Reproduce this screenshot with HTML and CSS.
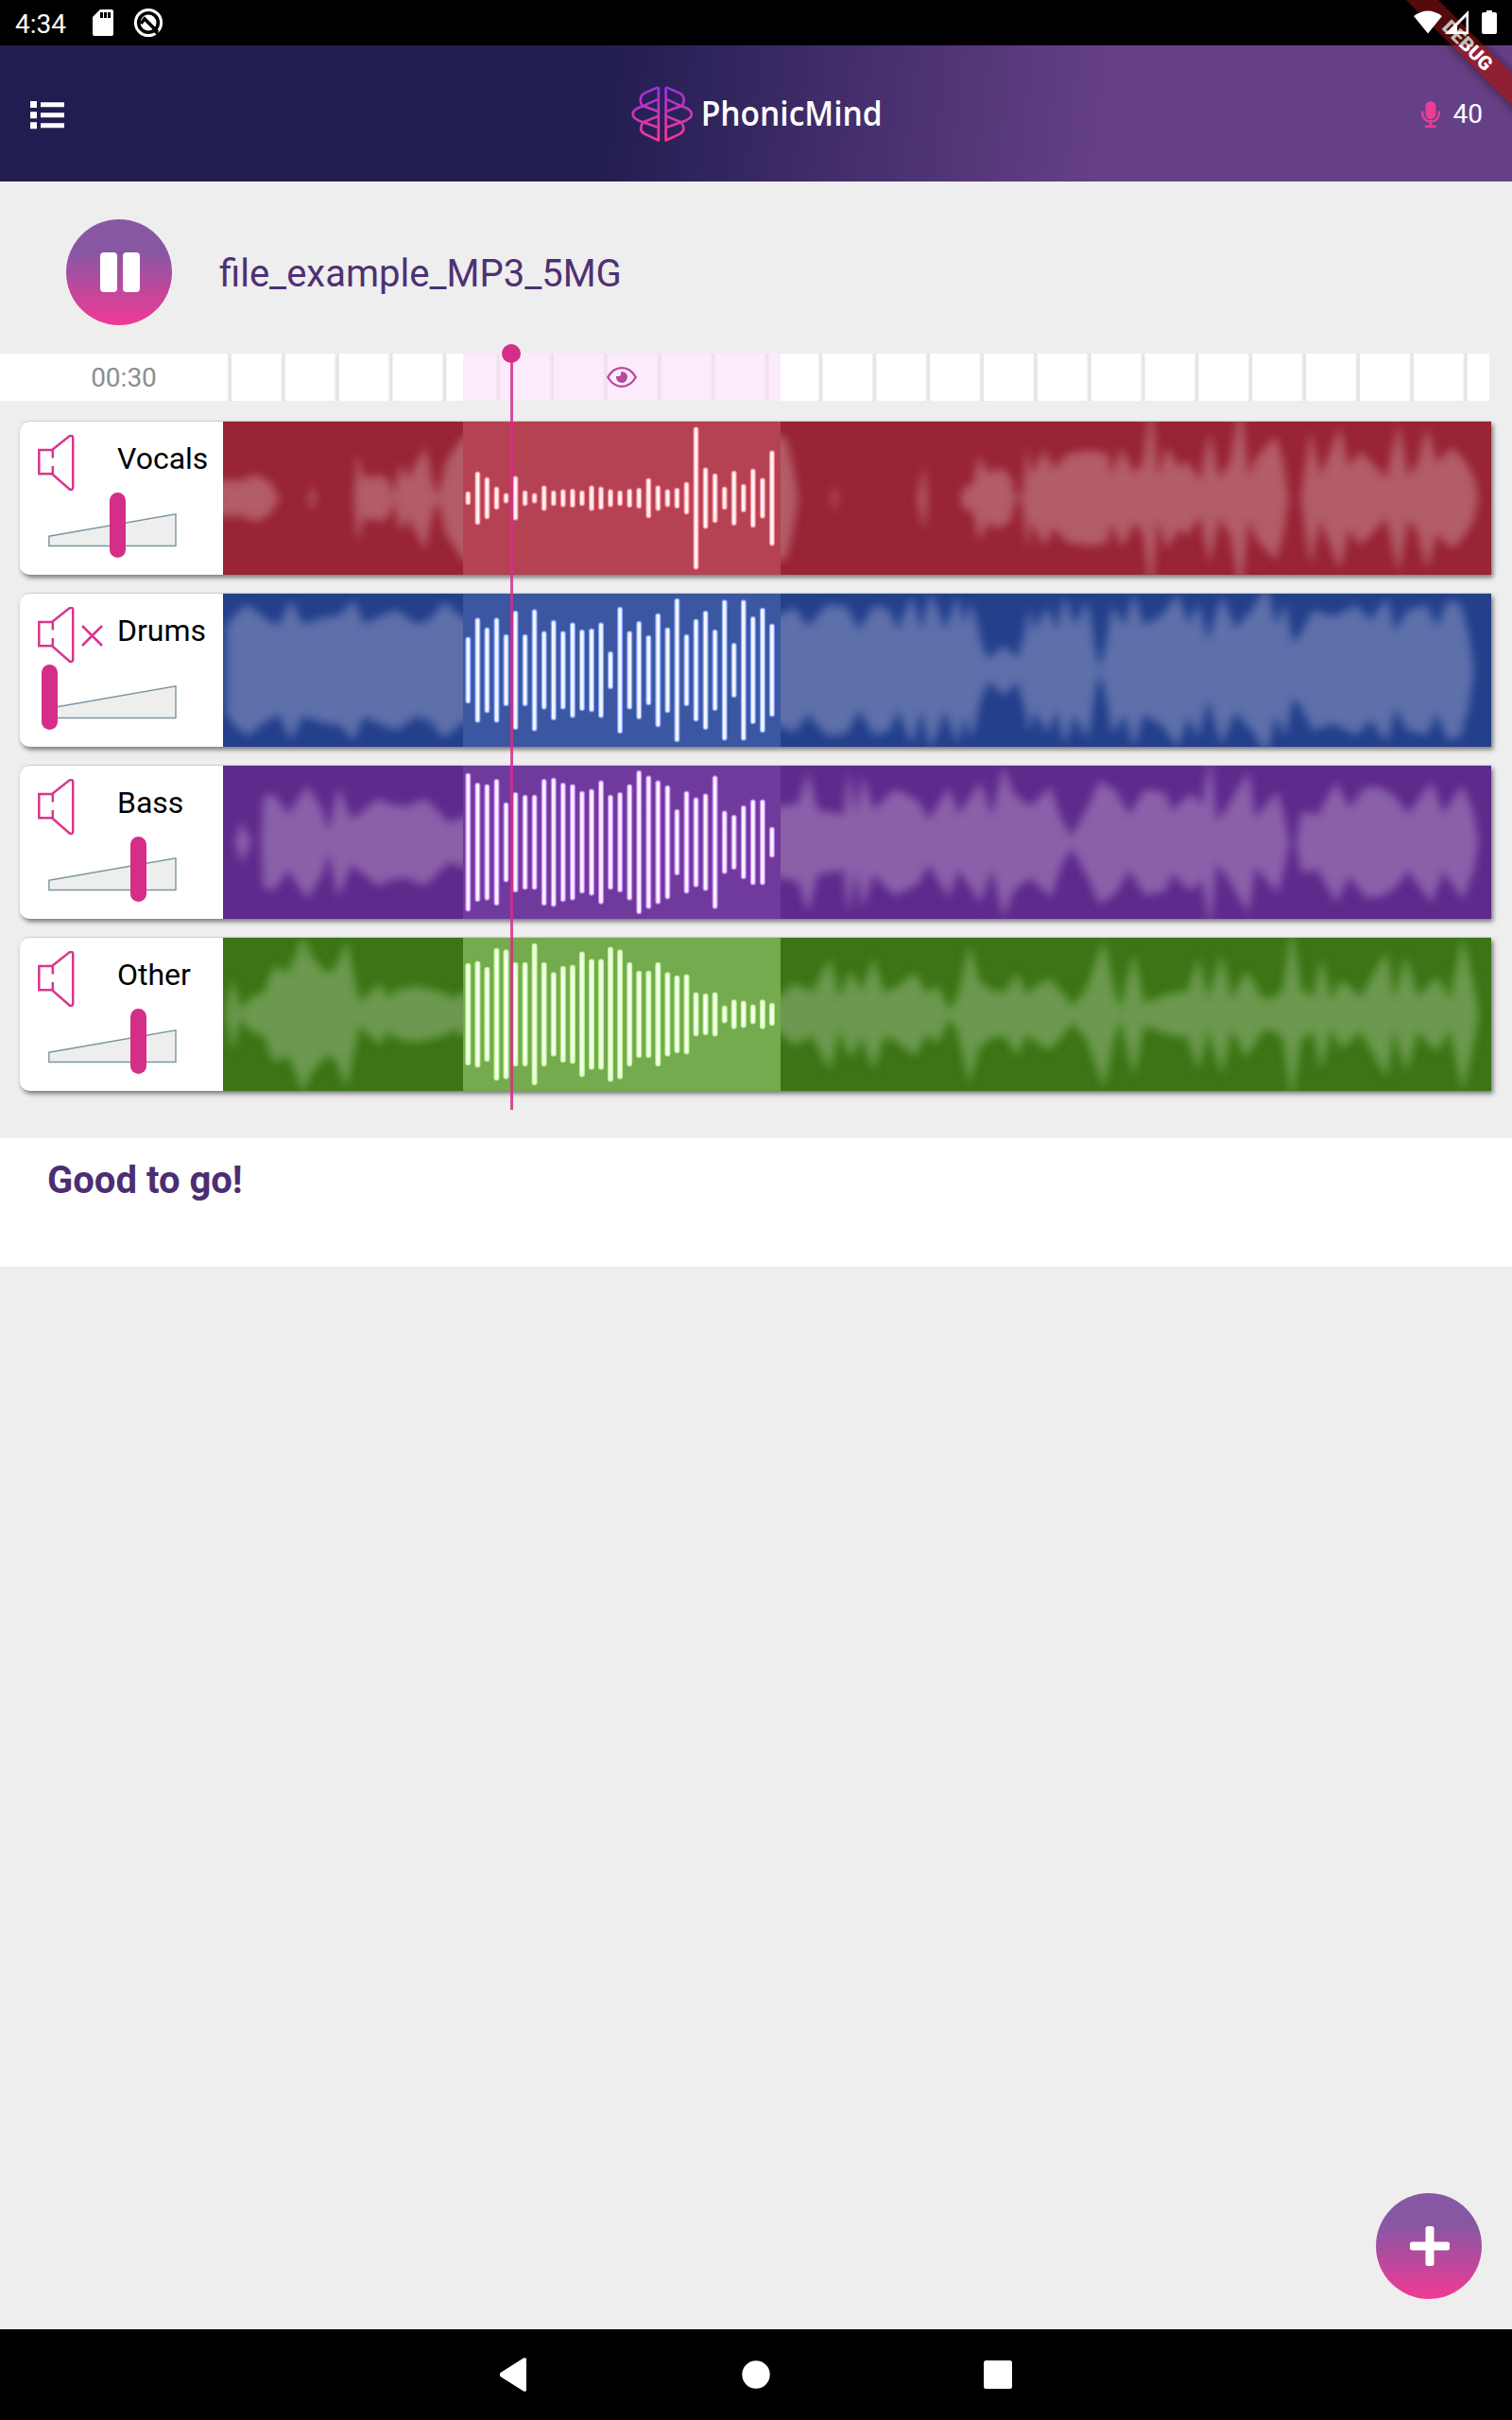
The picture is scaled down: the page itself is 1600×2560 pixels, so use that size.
FILE: index.html
```html
<!DOCTYPE html>
<html lang="en">
<head>
<meta charset="utf-8">
<title>PhonicMind</title>
<link rel="stylesheet" href="styles.css">
</head>
<body>
<svg class="defs" width="0" height="0" aria-hidden="true">
  <defs>
    <linearGradient id="brain" gradientUnits="userSpaceOnUse" x1="0" y1="30" x2="0" y2="90"><stop offset="0" stop-color="#9530dc"/><stop offset="1" stop-color="#fa3a92"/></linearGradient>
    <symbol id="speaker" viewBox="0 0 40 60"><path d="M1.3 16H15L33.5 1.3Q37 0 37.200 3V55.500Q37 59 33.500 57.500L15 41.300H1.300ZM15.800 15V24.500M15.800 33V42"/></symbol>
    <symbol id="wedge" viewBox="0 0 136 36"><path d="M.8 24.200 135 .8V34.500H.8Z"/></symbol>
  </defs>
</svg>

<div class="status">
  <span class="clock">4:34</span>
  <svg class="sd" width="22" height="28" viewBox="0 0 22 28"><path fill="#fff" d="M8 0H20a2 2 0 0 1 2 2V26a2 2 0 0 1-2 2H2a2 2 0 0 1-2-2V8Z"/><path d="M8 3h3v6H8zM12 3h3v6h-3zM16 3h3v6h-3z"/></svg>
  <svg class="q" width="32" height="32" viewBox="0 0 32 32"><circle cx="16" cy="16" r="13.600" fill="none" stroke="#fff" stroke-width="3"/><circle cx="16" cy="16" r="8.500" fill="#fff"/><path d="M8 17 12 12 26 26" fill="none" stroke="#000" stroke-width="3.600"/><path d="M22 24 28 30" stroke="#000" stroke-width="3"/></svg>
  <span class="spacer"></span>
  <svg width="88" height="26" viewBox="0 0 88 26"><path fill="#fff" d="M0 6Q15-5 30 6L15 24.500Z"/><path fill="#fff" fill-rule="evenodd" d="M33 25 58 0V25ZM46 22.500H55.500V6.500L46 16Z"/><path fill="#fff" d="M74 2h3V0h6v2h3q2 0 2 2V23q0 2-2 2H74q-2 0-2-2V4q0-2 2-2Z"/></svg>
</div>

<header class="header">
  <svg class="menu" width="36" height="30" viewBox="0 0 36 30"><path fill="#fff" d="M0 0h7v7H0zM0 11.300h7v7H0zM0 22.300h7v7H0zM11 1.300h25v5H11zM11 12.300h25v5H11zM11 23.300h25v5H11z"/></svg>
  <svg class="logo" width="270" height="68" viewBox="80 80 810 204">
    <g fill="none" stroke="url(#brain)" stroke-width="2.700" stroke-linejoin="round" transform="scale(3)">
      <path d="M56.500 31.800V88.200L41.700 81.300C36.700 78.300 36.700 73.700 40.300 69M56.500 31.800 42.300 38C36 41 36.300 48.700 40.300 51.800L56.500 57.700M56.500 44.300 40.300 51.800C25.700 56.300 25.700 64.300 40.300 69L56.500 62.300M40.300 69 56.500 74.700"/>
      <path d="M64.300 31.800V88.200L79.200 81.300C84.200 78.300 84.200 73.700 80.500 69M64.300 31.800 78.500 38C84.800 41 84.500 48.700 80.500 51.800L64.300 57.700M64.300 44.300 80.500 51.800C95.200 56.300 95.200 64.300 80.500 69L64.300 62.300M80.500 69 64.300 74.700"/>
    </g>
    <text class="brand" x="304" y="218" textLength="576" lengthAdjust="spacingAndGlyphs">PhonicMind</text>
  </svg>
  <div class="credits">
    <svg width="20" height="28" viewBox="0 0 20 28"><rect x="4.500" width="11" height="19" rx="5.500" fill="#ea3d95"/><path d="M1.200 11.500V13A8.500 8.500 0 0 0 18.800 13V11.500M10 21V26M5 26.800H15" fill="none" stroke="#ea3d95" stroke-width="2.400" stroke-linecap="round"/></svg>
    <span>40</span>
  </div>
</header>
<div class="banner">DEBUG</div>
<div class="scrim"></div>

<main class="main">
  <section class="player">
    <button class="round" aria-label="Pause"><svg width="42" height="42" viewBox="0 0 42 42"><rect width="18" height="42" rx="4" fill="#fff"/><rect x="24" width="18" height="42" rx="4" fill="#fff"/></svg></button>
    <h1 class="title">file_example_MP3_5MG</h1>
  </section>

  <section class="timeline">
    <span class="time">00:30</span>
    <div class="ruler"></div>
    <div class="range"><svg width="32" height="22" viewBox="0 0 32 22"><path d="M1.200 11Q7 1.200 16 1.200T30.800 11Q25 20.800 16 20.800T1.200 11Z" fill="none" stroke="#b44a9c" stroke-width="2.300"/><path fill="#b44a9c" d="M15.500 5A6 6 0 1 1 10 10H12.500Q15 10 15 7.500Z"/></svg></div>
    <div class="playhead"></div>
  </section>

  <section class="tracks" id="tracks">
    <article class="track vocals">
      <div class="panel"><svg class="spk"><use href="#speaker"/></svg><span class="name">Vocals</span><div class="volume"><svg class="wedge"><use href="#wedge"/></svg><i class="knob" style="left:65px"></i></div></div>
      <svg class="wave" data-track="vocals" width="1342" height="162" viewBox="236 -81 1342 162"></svg>
    </article>
    <article class="track drums">
      <div class="panel"><svg class="spk"><use href="#speaker"/></svg><svg class="mute" viewBox="0 0 23 23"><path d="M1 1 22 22M22 1 1 22"/></svg><span class="name">Drums</span><div class="volume"><svg class="wedge"><use href="#wedge"/></svg><i class="knob" style="left:-7px"></i></div></div>
      <svg class="wave" data-track="drums" width="1342" height="162" viewBox="236 -81 1342 162"></svg>
    </article>
    <article class="track bass">
      <div class="panel"><svg class="spk"><use href="#speaker"/></svg><span class="name">Bass</span><div class="volume"><svg class="wedge"><use href="#wedge"/></svg><i class="knob" style="left:86.500px"></i></div></div>
      <svg class="wave" data-track="bass" width="1342" height="162" viewBox="236 -81 1342 162"></svg>
    </article>
    <article class="track other">
      <div class="panel"><svg class="spk"><use href="#speaker"/></svg><span class="name">Other</span><div class="volume"><svg class="wedge"><use href="#wedge"/></svg><i class="knob" style="left:86.500px"></i></div></div>
      <svg class="wave" data-track="other" width="1342" height="162" viewBox="236 -81 1342 162"></svg>
    </article>
  </section>

  <section class="message">Good to go!</section>
  <button class="round fab" aria-label="Add"><svg width="42" height="42" viewBox="0 0 42 42"><rect x="16.500" width="9" height="42" rx="2.500" fill="#fff"/><rect y="16.500" width="42" height="9" rx="2.500" fill="#fff"/></svg></button>
</main>

<nav class="nav">
  <svg width="30" height="36" viewBox="0 0 30 36"><path fill="#fff" d="M24 .6Q27-.8 27 2V34Q27 36.800 24 35.400L-.5 20Q-3 18-.5 16Z" transform="translate(1)"/></svg>
  <svg width="30" height="30" viewBox="0 0 30 30"><circle cx="15" cy="15" r="14.700" fill="#fff"/></svg>
  <svg width="30" height="30" viewBox="0 0 30 30"><rect width="30" height="30" rx="2.500" fill="#fff"/></svg>
</nav>
<script src="script.js"></script>
</body>
</html>
```
FILE: styles.css
```css
* { box-sizing: border-box; }
body {
  margin: 0;
  width: 1600px;
  height: 2560px;
  display: flex;
  flex-direction: column;
  position: relative;
  overflow: hidden;
  background: #eee;
  font-family: Roboto, sans-serif;
}
svg { display: block; flex: none; }
button { border: 0; padding: 0; }
.defs { position: absolute; }

.status { height: 48px; flex: none; background: #000; display: flex; align-items: center; padding: 0 16px; color: #fff; }
.status > * { position: relative; z-index: 3; }
.clock { font-size: 28px; line-height: 48px; width: 82px; padding-top: 3px; }
.q { margin-left: 21px; }
.spacer { flex: 1; }

.header {
  height: 144px; flex: none;
  display: grid; grid-template-columns: 1fr auto 1fr; align-items: center;
  padding: 2px 31px 0 32px;
  background: linear-gradient(97deg, #221d51 40%, #664087 73%);
}
.menu { transform: translateY(1px); }
.logo { overflow: visible; transform: translateX(1px); }
.brand { font: 600 110px "Open Sans", sans-serif; fill: #fff; }
.credits { justify-self: end; display: flex; align-items: center; gap: 14px; color: #fff; font-size: 28px; padding-bottom: 1px; }
.banner {
  position: absolute; z-index: 1; left: 1453px; top: 36px; width: 200px; height: 24px;
  transform: rotate(45deg);
  background: rgba(160, 20, 20, .72);
  box-shadow: 0 0 12px rgba(0, 0, 0, .5);
  color: #fff; font-size: 20.4px; font-weight: 900; line-height: 24px; text-align: center;
}
.scrim { position: absolute; z-index: 2; left: 0; top: 0; width: 1600px; height: 48px; background: rgba(0, 0, 0, .25); }

.main { flex: 1; display: flex; flex-direction: column; position: relative; }
.player { height: 182px; padding: 40px 70px 0; display: flex; align-items: flex-start; gap: 50px; }
.round {
  width: 112px; height: 112px; border-radius: 50%; flex: none;
  display: flex; align-items: center; justify-content: center;
  padding-left: 2px;
  background: linear-gradient(#8857a4 30%, #ec3b95 97%);
}
.title { margin: 0; font-size: 40px; font-weight: 400; line-height: 112px; color: #4e3173; padding-top: 2px; }

.timeline { height: 50px; width: 1576px; background: #fff; display: flex; position: relative; }
.time { width: 240px; padding-left: 22px; text-align: center; font-size: 28px; line-height: 52px; color: #8d8d8d; }
.ruler { flex: 1; background: repeating-linear-gradient(90deg, #fff 0, #f0f0f0 1px, #e6e6e6 2.500px, #e3e3e3 3.500px, #e8e8e8 4.500px, #fff 5.500px, #fff 56.860px); }
.range {
  position: absolute; left: 490px; top: 0; width: 336px; height: 50px;
  display: flex; align-items: center; justify-content: center;
  background: rgba(249, 220, 248, .57);
}
.playhead { position: absolute; z-index: 4; left: 540px; top: 0; width: 3px; height: 800px; background: rgba(212, 46, 136, .85); }
.playhead::before { content: ""; position: absolute; left: -9px; top: -10px; width: 20px; height: 20px; border-radius: 50%; background: #d42e88; }

.tracks { padding: 22px 22px 0 21px; display: flex; flex-direction: column; gap: 20px; }
.track { height: 162px; display: flex; border-radius: 10px 0 0 10px; background: #fff; box-shadow: 2px 3px 5px rgba(0, 0, 0, .5), 0 -1px 0 #d6d6d6; }
.panel { width: 215px; position: relative; display: grid; grid-template-columns: 103px 1fr; grid-template-rows: 75px 1fr; flex: none; }
.spk { width: 40px; height: 60px; margin: 14px 0 0 19px; fill: none; stroke: #d9368c; stroke-width: 2.500; }
.mute { position: absolute; left: 65px; top: 33px; width: 23px; height: 23px; stroke: #d9368c; stroke-width: 2.500; }
.name { font-size: 32px; line-height: 36px; padding-top: 21px; color: #000; }
.volume { grid-column: 1 / 3; position: relative; margin-left: 30px; }
.wedge { width: 136px; height: 36px; margin-top: 22px; fill: #eee; stroke: #7c95a2; stroke-width: 1.400; }
.knob { position: absolute; top: 0; width: 17px; height: 69px; border-radius: 9px; background: #d42e88; }

.vocals { --bg: #982434; --sel: #b44252; --glow: #ff8795; --tint: #fff1f3; --halo: #a32e3f; --body: #b25d69; }
.drums { --bg: #24408b; --sel: #3c57a1; --glow: #86a5ff; --tint: #f1f5ff; --halo: #2d4a98; --body: #5e70aa; }
.bass { --bg: #5f2a8c; --sel: #703a9d; --glow: #c582f7; --tint: #faf1ff; --halo: #6a3299; --body: #8a61a9; }
.other { --bg: #3c7416; --sel: #74ab4e; --glow: #b9f58d; --tint: #f5ffee; --halo: #468a20; --body: #6d9850; }
.wave .bg { fill: var(--bg); }
.wave .sel { fill: var(--sel); }
.wave .halo { fill: var(--halo); stroke: var(--halo); stroke-width: 4; opacity: .6; filter: blur(5px); }
.wave .body { fill: var(--body); filter: blur(5px); }
.wave .glow { stroke: var(--glow); stroke-width: 6; stroke-linecap: round; filter: blur(.7px); }
.wave .bar { stroke: var(--tint); stroke-width: 3.600; stroke-linecap: round; }

.message { margin-top: 50px; height: 136px; background: #fff; padding: 19px 50px; font-size: 40px; line-height: 52px; font-weight: 700; color: #4b2e72; }
.fab { position: absolute; right: 32px; bottom: 32px; }

.nav { height: 96px; flex: none; background: #000; display: flex; align-items: center; justify-content: center; gap: 226px; }
```
FILE: script.js
```js
// Bar half-heights inside the selected range, and x,half-height pairs of the envelope around it.
const tracks = {
  vocals: {
    bars: [20,83,65,35,15,69,23,15,39,23,27,28,23,39,35,27,23,28,31,62,39,27,31,50,225,96,77,35,85,43,92,63,150],
    left: "230,20 258,20 270,27 285,18 290,10 295,0|327,0 330,14 334,0|375,0 378,50 385,22 405,26 412,18 416,2 424,38 432,22 450,58 458,15 464,3 472,40 490,70 500,70",
    right: "816,76 826,68 831,70 839,35 844,0|881,0 883,16 886,0|971,0 978,36 981,0|1017,0 1020,12 1030,15 1036,48 1045,28 1058,34 1069,25 1074,2 1082,2 1087,58 1092,26 1105,54 1115,33 1130,50 1155,54 1172,50 1176,26 1187,56 1200,28 1210,40 1218,110 1225,24 1235,57 1247,35 1256,42 1270,20 1280,74 1290,22 1302,40 1313,108 1321,24 1330,46 1350,70 1358,40 1363,0|1377,0 1381,32 1387,76 1397,24 1418,80 1427,35 1440,53 1467,22 1480,84 1490,24 1500,38 1510,80 1520,40 1537,57 1550,42 1559,25 1564,0"
  },
  drums: {
    bars: [104,165,134,165,112,187,112,192,123,157,123,150,127,131,150,58,199,123,154,109,179,134,226,112,161,187,127,222,85,222,169,196,146],
    left: "240,50 250,64 262,74 282,57 295,50 308,79 320,52 345,60 360,62 374,79 385,52 405,62 420,68 440,52 455,57 470,77 490,58 500,58",
    right: "816,62 826,62 840,71 855,49 875,74 895,72 909,45 925,73 940,69 950,45 965,83 975,45 985,88 1000,45 1013,83 1020,51 1028,77 1034,50 1038,30 1046,12 1062,28 1077,13 1084,40 1089,70 1095,45 1108,71 1118,45 1127,83 1137,50 1150,77 1155,52 1158,25 1164,2 1171,30 1177,72 1190,50 1200,86 1210,50 1230,62 1246,86 1257,52 1268,75 1278,32 1293,84 1307,47 1325,68 1340,94 1350,50 1360,75 1368,30 1376,40 1390,68 1410,60 1435,73 1450,56 1468,81 1476,43 1490,68 1510,73 1520,48 1533,79 1545,75 1554,40 1559,0"
  },
  bass: {
    bars: [218,187,183,199,125,157,149,149,199,203,187,183,161,168,195,149,157,183,226,210,195,179,103,161,141,153,210,99,85,115,134,134,47],
    left: "249,0 256,23 265,0|277,0 279,52 290,54 305,31 325,64 340,38 348,12 358,62 372,25 400,49 415,42 430,40 450,49 475,22 490,28 500,28",
    right: "816,40 826,40 845,44 855,79 865,36 880,34 893,31 898,81 906,31 913,75 924,36 947,60 970,48 983,25 1004,62 1014,31 1027,51 1037,68 1050,29 1062,86 1072,55 1090,40 1112,62 1122,28 1134,6 1150,37 1164,70 1180,58 1195,31 1212,60 1233,55 1240,35 1260,55 1272,42 1281,97 1287,24 1297,36 1321,80 1328,27 1352,57 1359,28 1364,0 1372,0 1377,34 1395,31 1414,68 1428,38 1445,62 1460,62 1475,53 1490,32 1515,68 1527,32 1548,64 1559,32 1564,0"
  },
  other: {
    bars: [160,167,148,208,204,163,163,223,163,132,151,155,197,174,174,212,204,163,136,136,163,132,121,125,68,64,68,26,45,41,29,45,34],
    left: "240,6 246,40 254,3 265,18 280,24 290,54 305,46 315,70 320,88 330,64 345,46 355,50 367,82 374,40 380,12 402,34 410,18 420,27 440,31 470,24 480,16 490,24 500,24",
    right: "816,10 826,20 840,34 860,24 878,62 888,16 900,48 912,24 924,62 935,24 948,29 968,46 980,22 992,32 1004,4 1013,16 1019,42 1026,78 1035,38 1050,25 1065,25 1076,46 1085,22 1110,40 1125,22 1135,8 1150,28 1168,82 1178,28 1186,4 1200,68 1210,12 1240,23 1257,25 1268,62 1278,15 1293,66 1303,15 1319,48 1335,18 1350,18 1359,30 1367,96 1376,28 1390,18 1398,62 1408,15 1420,38 1440,18 1467,70 1475,15 1488,64 1500,18 1520,41 1535,16 1548,86 1558,36 1564,0"
  }
};

const SCALE = 0.93;
const outline = part => {
  const pts = part.split(" ").map(p => p.split(",").map(Number)).map(([x, h]) => [x, h * SCALE]);
  const top = pts.map(([x, h]) => `${x} ${-h}`);
  const bottom = pts.reverse().map(([x, h]) => `${x} ${h}`);
  return `M${top.concat(bottom).join("L")}Z`;
};
const envelope = text => text.split("|").map(outline).join("");

document.querySelectorAll(".wave").forEach(svg => {
  const t = tracks[svg.dataset.track];
  const lines = t.bars.map((h, i) => {
    const x = 495.3 + i * 10.05, half = Math.max(h / 3 - 2.2, 1);
    return `M${x.toFixed(1)} ${-half}V${half}`;
  }).join("");
  const shape = envelope(t.left) + envelope(t.right);
  svg.innerHTML = `<rect class="bg" x="236" y="-81" width="1342" height="162"/>
    <path class="halo" d="${shape}"/><path class="body" d="${shape}"/>
    <rect class="sel" x="490" y="-81" width="336" height="162"/><path class="glow" d="${lines}"/><path class="bar" d="${lines}"/>`;
});
```
